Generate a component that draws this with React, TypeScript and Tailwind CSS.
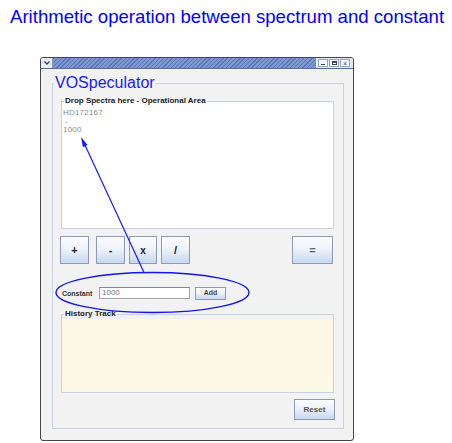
import React from "react";

const btn =
  "flex items-center justify-center border border-[#8d9cb4] bg-[linear-gradient(to_bottom,#fbfcfe_0%,#eef3fa_45%,#c6d7ef_100%)] font-bold";

export default function App() {
  return (
    <div className="relative w-[452px] h-[443px] bg-white overflow-hidden font-['Liberation_Sans',Arial,sans-serif]">
      <h1 className="pl-[10px] pt-[6px] text-[18.6px] leading-[21px] text-[#0000ff] whitespace-nowrap font-normal">
        Arithmetic operation between spectrum and constant
      </h1>

      <div className="ml-[40px] mt-[30px] w-[314px] h-[384px] border border-[#474747] rounded-[3px] bg-[#f2f2f2] flex flex-col overflow-hidden">
        {/* title bar */}
        <div className="h-[11px] flex items-stretch border-b border-[#5a6e9c]">
          <div className="w-[12px] flex items-center justify-center bg-[#e9edf3] border-r border-[#8a97b0]">
            <svg width="8" height="6" viewBox="0 0 8 6">
              <path d="M1.5 1.5 L4 4 L6.5 1.5" fill="none" stroke="#2a3f77" strokeWidth="1.3" />
            </svg>
          </div>
          <div className="flex-1 bg-[repeating-linear-gradient(135deg,#5c77b8_0px,#5c77b8_1px,#7f97cf_1px,#7f97cf_3px)]" />
          <div className="w-[37px] flex items-center gap-[1px] pl-[2px] bg-[#e6e9ef]">
            <div className="w-[10px] h-[8px] border border-[#9aa6bc] bg-[#f4f6fa] flex items-end justify-center pb-[1px]">
              <div className="w-[4px] h-[1px] bg-[#445]" />
            </div>
            <div className="w-[10px] h-[8px] border border-[#9aa6bc] bg-[#f4f6fa] flex items-center justify-center">
              <div className="w-[5px] h-[4px] border border-[#445] border-t-2" />
            </div>
            <div className="w-[10px] h-[8px] border border-[#9aa6bc] bg-[#f4f6fa] flex items-center justify-center text-[7px] leading-[7px] text-[#445]">
              ×
            </div>
          </div>
        </div>

        {/* content */}
        <div className="flex-1 pl-[11px] pr-[9px] pt-[5px]">
          <fieldset className="border border-[#c6d3e6]">
            <legend className="ml-[1px] px-[1px] text-[16px] leading-[18px] text-[#1a1af5]">VOSpeculator</legend>

            <div className="pl-[8px] pr-[9px] pb-[8px] flex flex-col">
              <fieldset className="mt-[4px] border border-[#c6d3e6] bg-white">
                <legend className="ml-[2px] px-[1px] text-[8px] leading-[10px] font-bold text-[#222]">
                  Drop Spectra here - Operational Area
                </legend>
                <div className="h-[122px] pt-[3px] pl-[1px] text-[8px] leading-[8.5px] text-[#8a8a8a] tracking-[0.2px]">
                  <div>HD172167</div>
                  <div className="pl-[2px] text-[#777]">-</div>
                  <div>1000</div>
                </div>
              </fieldset>

              <div className="mt-[7px] flex items-center -ml-[1px] mr-[1px]">
                <div className={`${btn} w-[29px] h-[28px] text-[11px] text-[#222]`}>+</div>
                <div className={`${btn} ml-[7px] w-[29px] h-[28px] text-[11px] text-[#222]`}>-</div>
                <div className={`${btn} ml-[4px] w-[28px] h-[28px] text-[10px] text-[#222]`}>x</div>
                <div className={`${btn} ml-[4px] w-[29px] h-[28px] text-[11px] text-[#222]`}>/</div>
                <div className={`${btn} ml-auto w-[41px] h-[28px] text-[11px] text-[#666]`}>=</div>
              </div>

              <div className="mt-[23px] h-[12px] flex items-center">
                <div className="ml-[1px] w-[37px] text-[7px] leading-[9px] text-[#333] font-semibold">Constant</div>
                <div className="w-[91px] h-[12px] border border-[#9aa3ae] border-t-[#7f8893] bg-white text-[8px] leading-[10px] text-[#777] pl-[2px]">
                  1000
                </div>
                <div className={`${btn} ml-[5px] w-[31px] h-[13px] text-[7px] text-[#444]`}>Add</div>
              </div>

              <fieldset className="mt-[10px] border border-[#c6d3e6]">
                <legend className="ml-[2px] px-[1px] text-[8px] leading-[10px] font-bold text-[#222]">History Track</legend>
                <div className="h-[73px] bg-[#fdf7e6]" />
              </fieldset>

              <div className="mt-[6px] self-end -mr-[1px]">
                <div className={`${btn} w-[41px] h-[21px] text-[8px] text-[#555]`}>Reset</div>
              </div>
            </div>
          </fieldset>
        </div>
      </div>

      <svg className="absolute left-0 top-0 pointer-events-none" width="452" height="443" viewBox="0 0 452 443">
        <ellipse cx="152.5" cy="292.5" rx="96.5" ry="20" fill="none" stroke="#1414f0" strokeWidth="1.4" />
        <line x1="144" y1="272.5" x2="84" y2="143" stroke="#1a1af5" strokeWidth="1.2" />
        <polygon points="81,137 87.5,145 82.9,147.2" fill="#1a1af5" />
      </svg>
    </div>
  );
}
